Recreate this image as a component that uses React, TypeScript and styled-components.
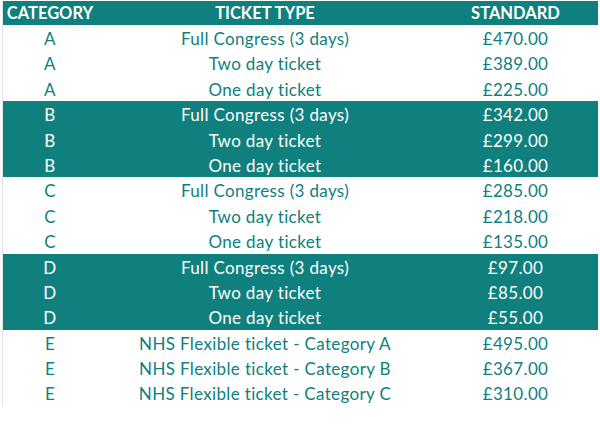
import React from "react";
import styled, { createGlobalStyle } from "styled-components";

const TEAL = "#0f807d";

const Global = createGlobalStyle`
  html, body { margin: 0; padding: 0; background: #ffffff; }
  body { font-family: Lato, "Open Sans", sans-serif; }
`;

const Page = styled.div`
  padding: 1px 3px 0 2px;
  width: 600px;
  box-sizing: border-box;
`;

const Table = styled.div`
  display: grid;
  grid-template-columns: 94px 336px 165px;
  width: 595px;
  border-left: 1px solid #e2e2e2;
`;

const HeaderCell = styled.div`
  background: ${TEAL};
  color: #ffffff;
  font-weight: 700;
  font-size: 16.5px;
  height: 24px;
  line-height: 24px;
  text-align: center;
  white-space: nowrap;
`;

const Cell = styled.div<{ $shaded: boolean }>`
  background: ${(p) => (p.$shaded ? TEAL : "#ffffff")};
  color: ${(p) => (p.$shaded ? "#ffffff" : TEAL)};
  font-size: 17px;
  letter-spacing: 0.35px;
  height: 25.4px;
  line-height: 27px;
  text-align: center;
  white-space: nowrap;
`;

const rows: [string, string, string][] = [
  ["A", "Full Congress (3 days)", "£470.00"],
  ["A", "Two day ticket", "£389.00"],
  ["A", "One day ticket", "£225.00"],
  ["B", "Full Congress (3 days)", "£342.00"],
  ["B", "Two day ticket", "£299.00"],
  ["B", "One day ticket", "£160.00"],
  ["C", "Full Congress (3 days)", "£285.00"],
  ["C", "Two day ticket", "£218.00"],
  ["C", "One day ticket", "£135.00"],
  ["D", "Full Congress (3 days)", "£97.00"],
  ["D", "Two day ticket", "£85.00"],
  ["D", "One day ticket", "£55.00"],
  ["E", "NHS Flexible ticket - Category A", "£495.00"],
  ["E", "NHS Flexible ticket - Category B", "£367.00"],
  ["E", "NHS Flexible ticket - Category C", "£310.00"],
];

export default function App() {
  return (
    <Page>
      <Global />
      <Table>
        <HeaderCell>CATEGORY</HeaderCell>
        <HeaderCell>TICKET TYPE</HeaderCell>
        <HeaderCell>STANDARD</HeaderCell>
        {rows.map(([cat, type, price], i) => {
          const shaded = cat === "B" || cat === "D";
          return (
            <React.Fragment key={i}>
              <Cell $shaded={shaded}>{cat}</Cell>
              <Cell $shaded={shaded}>{type}</Cell>
              <Cell $shaded={shaded}>{price}</Cell>
            </React.Fragment>
          );
        })}
      </Table>
    </Page>
  );
}
